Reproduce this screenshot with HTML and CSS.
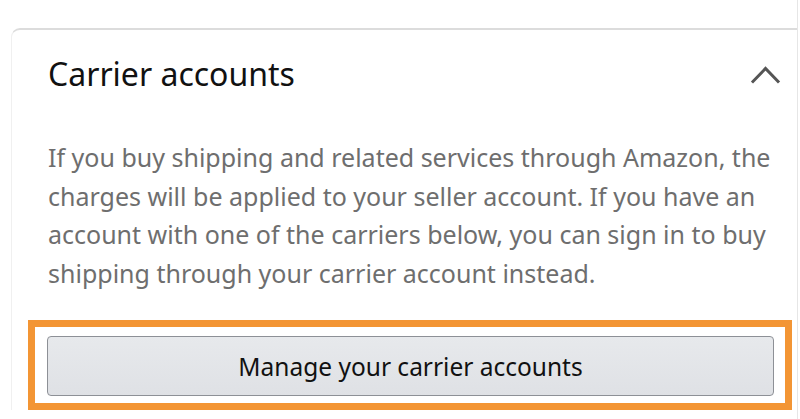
FILE: index.html
```html
<!DOCTYPE html>
<html lang="en">
<head>
<meta charset="utf-8">
<title>Carrier accounts</title>
<link rel="stylesheet" href="styles.css">
</head>
<body>
<div class="page">
  <section class="card">
    <header class="card-header">
      <h2 class="card-title">Carrier accounts</h2>
      <svg class="chevron" width="30" height="22" viewBox="0 0 30 22" aria-hidden="true">
        <polyline points="2,18.5 14.5,5.5 27,18.5" fill="none" stroke="#555" stroke-width="3" stroke-linecap="square"/>
      </svg>
    </header>
    <p class="card-text">If you buy shipping and related services through Amazon, the charges will be applied to your seller account. If you have an account with one of the carriers below, you can sign in to buy shipping through your carrier account instead.</p>
    <div class="highlight">
      <button class="btn" type="button">Manage your carrier accounts</button>
    </div>
  </section>
</div>
</body>
</html>
```

FILE: styles.css
```css
html, body {
  margin: 0;
  padding: 0;
  background: #fff;
}
body {
  font-family: "Noto Sans", "Open Sans", Arial, sans-serif;
  color: #111;
}
.page {
  box-sizing: border-box;
  width: 798px;
  height: 419px;
  overflow: hidden;
  border-right: 1px solid #e6e6e6;
  padding: 28px 0 0 11px;
}
.card {
  border-top: 2px solid #dcdcdc;
  border-left: 1px solid #f0f0f0;
  border-top-left-radius: 9px;
  padding: 0 0 0 36px;
}
.card-header {
  display: flex;
  align-items: center;
  justify-content: space-between;
  height: 88px;
  padding-right: 16px;
}
.card-title {
  margin: 0;
  font-size: 32px;
  font-weight: 400;
  color: #111;
  line-height: 1;
}
.chevron {
  display: block;
}
.card-text {
  margin: 20px 0 0;
  width: 727px;
  font-size: 25px;
  line-height: 38.5px;
  color: #6e6e6e;
}
.highlight {
  margin: 28px 0 0 -20px;
  width: 764px;
  box-sizing: border-box;
  border: 7px solid #f39534;
  padding: 9px 8px 7px 12px;
}
.btn {
  display: block;
  width: 727px;
  height: 60px;
  box-sizing: border-box;
  border: 1px solid #8d9096;
  border-radius: 4px;
  background: linear-gradient(#e7e9ec, #dfe1e5);
  font-family: inherit;
  font-size: 24.5px;
  color: #111;
  text-align: center;
  padding: 0;
}
```
